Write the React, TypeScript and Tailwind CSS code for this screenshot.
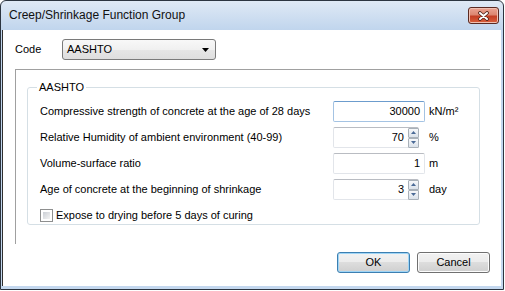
import React from 'react';

const rows = [
  { label: 'Compressive strength of concrete at the age of 28 days', value: '30000', unit: 'kN/m²', spin: false, focus: true },
  { label: 'Relative Humidity of ambient environment (40-99)', value: '70', unit: '%', spin: true, focus: false },
  { label: 'Volume-surface ratio', value: '1', unit: 'm', spin: false, focus: false },
  { label: 'Age of concrete at the beginning of shrinkage', value: '3', unit: 'day', spin: true, focus: false },
];

const SpinHalf = ({ up }: { up: boolean }) => (
  <div className="h-[10px] w-[11px] flex items-center justify-center border border-[#a9b1b9] rounded-[1px] bg-[linear-gradient(to_bottom,#f7f8fa,#dbe2ea)]">
    <svg width="5" height="3" viewBox="0 0 5 3">
      {up ? <path d="M0 3 L2.5 0 L5 3 Z" fill="#4a6a96" /> : <path d="M0 0 L2.5 3 L5 0 Z" fill="#4a6a96" />}
    </svg>
  </div>
);

const Field = ({ value, spin, focus }: { value: string; spin: boolean; focus: boolean }) => (
  <div className="w-[92px]">
    <div
      className={
        'h-[21px] flex items-center rounded-[2px] border ' +
        (focus
          ? 'w-[92px] border-[#a4c3e3] border-t-[#6c9ccd]'
          : spin
          ? 'w-[86px] border-[#e2e5ea] border-t-[#b9bcc2]'
          : 'w-[92px] border-[#e2e5ea] border-t-[#b9bcc2]')
      }
    >
      <span className="flex-1 text-right pr-[4px]">{value}</span>
      {spin && (
        <div className="flex flex-col h-[20px] mr-[-1px]">
          <SpinHalf up />
          <SpinHalf up={false} />
        </div>
      )}
    </div>
  </div>
);

const Button = ({ label, focus }: { label: string; focus?: boolean }) => (
  <div
    className={
      'w-[73px] h-[21px] flex items-center justify-center rounded-[3px] border bg-[linear-gradient(to_bottom,#f2f2f2_0%,#ebebeb_50%,#dddddd_50%,#cfcfcf_100%)] ' +
      (focus ? 'border-[#3c7fb1] shadow-[inset_0_0_0_1px_#9fd5f6]' : 'border-[#707070] shadow-[inset_0_0_0_1px_#fcfcfc]')
    }
  >
    {label}
  </div>
);

export default function App() {
  return (
    <div className="w-[505px] h-[291px] bg-white text-black text-[11px] leading-[13px] font-['Liberation_Sans',Arial,sans-serif]">
      <div className="w-[504px] h-[290px] flex flex-col rounded-t-[6px] border border-[#2c3540] overflow-hidden bg-[linear-gradient(to_bottom,#dfe9f5_0px,#c0d5ed_29px,#c4d8ef_100%)]">
        <div className="h-[29px] flex items-center pl-[8px] pr-[4px]">
          <span className="text-[12px] leading-[15px] text-[#111]">Creep/Shrinkage Function Group</span>
          <div className="ml-auto w-[31px] h-[17px] flex items-center justify-center rounded-[3px] border border-[#5a2a22] bg-[linear-gradient(to_bottom,#eba493_0%,#dc8670_45%,#c43f25_55%,#d8603c_100%)] shadow-[inset_0_0_0_1px_#f0c0b2]">
            <svg width="13" height="10" viewBox="0 0 13 10">
              <path d="M3 2 L10 8 M10 2 L3 8" stroke="#4a2018" strokeWidth="3.6" strokeLinecap="round" />
              <path d="M3 2 L10 8 M10 2 L3 8" stroke="#ffffff" strokeWidth="2" strokeLinecap="round" />
            </svg>
          </div>
        </div>

        <div className="flex-1 ml-[1px] mr-[2px] mb-[3px] bg-white border-l border-[#2f2f2f] flex flex-col pl-[12px] pr-[11px] pt-[9px]">
          <div className="flex items-center h-[21px]">
            <span className="w-[47px]">Code</span>
            <div className="w-[154px] h-[21px] flex items-center pl-[4px] pr-[6px] rounded-[3px] border border-[#7a7a7a] bg-[linear-gradient(to_bottom,#f8f8f8_0%,#f0f0f0_50%,#e6e6e6_50%,#dedede_100%)]">
              <span>AASHTO</span>
              <svg className="ml-auto" width="7" height="4" viewBox="0 0 7 4">
                <path d="M0 0 L7 0 L3.5 4 Z" fill="#000" />
              </svg>
            </div>
          </div>

          <div className="mt-[9px] h-[175px] border-t border-l border-[#a0a0a0] pl-[11px] pt-[11px]">
            <fieldset className="w-[453px] border border-[#d5dfe5] rounded-[3px] pl-[12px] pt-[7px] pb-[1px]">
              <legend className="ml-[-3px] px-[2px]">AASHTO</legend>
              <div className="flex flex-col gap-[5px]">
                {rows.map((r) => (
                  <div key={r.label} className="flex items-center h-[21px]">
                    <span className="w-[293px]">{r.label}</span>
                    <Field value={r.value} spin={r.spin} focus={r.focus} />
                    <span className="ml-[4px]">{r.unit}</span>
                  </div>
                ))}
                <div className="flex items-center h-[15px] mt-[3px]">
                  <div className="w-[13px] h-[13px] border border-[#8e8f8f] p-[2px] bg-white">
                    <div className="w-full h-full bg-[linear-gradient(135deg,#cbcfd5,#f4f4f4)]" />
                  </div>
                  <span className="ml-[3px]">Expose to drying before 5 days of curing</span>
                </div>
              </div>
            </fieldset>
          </div>

          <div className="mt-[8px] flex justify-end gap-[7px]">
            <Button label="OK" focus />
            <Button label="Cancel" />
          </div>
        </div>
      </div>
    </div>
  );
}
